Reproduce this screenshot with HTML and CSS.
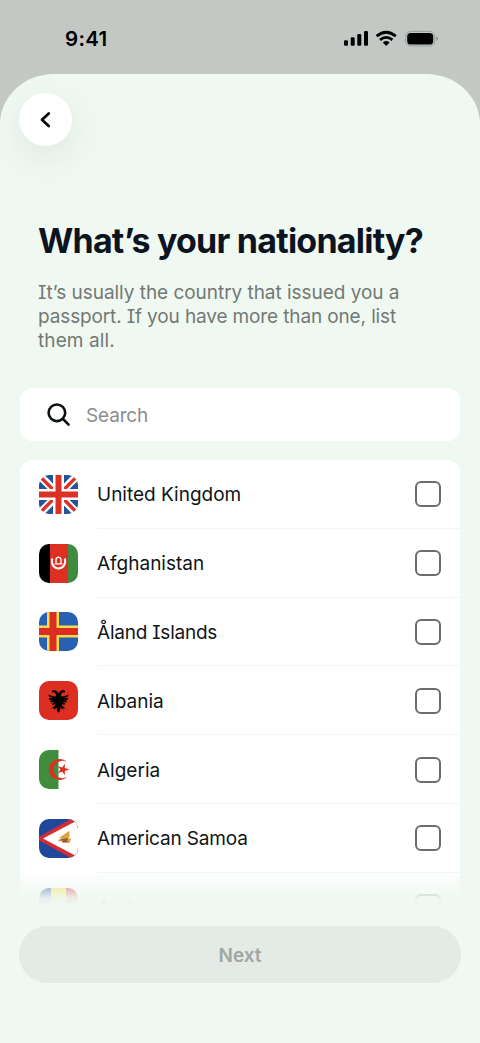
FILE: index.html
```html
<!DOCTYPE html>
<html lang="en">
<head>
<meta charset="utf-8">
<title>Nationality</title>
<link rel="stylesheet" href="styles.css">
</head>
<body>
<div class="status">
  <span class="time">9:41</span>
  <svg class="indicators" width="96" height="18" viewBox="0 0 96 18">
    <rect x="0" y="10.3" width="4" height="5.4" rx="1.2"/><rect x="6.7" y="7.3" width="4" height="8.4" rx="1.2"/><rect x="13.3" y="4" width="4" height="11.7" rx="1.2"/><rect x="20" y="1" width="4" height="14.7" rx="1.2"/>
    <g fill="none" stroke="#000" stroke-width="2.8"><path d="M32.6 6.2Q42.2-1.8 51.8 6.2"/><path d="M36 9.8Q42.2 5 48.4 9.8"/></g><path d="M38.8 12.5Q42.2 9.7 45.6 12.5L42.2 16Z"/>
    <rect x="61.7" y="1.4" width="29" height="14.6" rx="5" fill="none" stroke="#9b9f9b"/><rect x="63.2" y="2.9" width="26" height="11.6" rx="3.6"/><path d="M92.4 6.3Q95.6 8.7 92.4 11.1Z" fill="#858985"/>
  </svg>
</div>
<main class="sheet">
  <button class="back" aria-label="Back"><svg width="12" height="18" viewBox="0 0 12 18"><path d="M8.7 2.400 2 8.700l6.700 6.300"/></svg></button>
  <h1>What’s your nationality?</h1>
  <p class="intro"><span class="l1">It’s usually the country that issued you a</span><br><span class="l2">passport. If you have more than one, list</span><br><span class="l3">them all.</span></p>
  <div class="search"><svg width="24" height="24" viewBox="0 0 24 24"><circle cx="9.9" cy="9.8" r="8.3"/><path d="m16 16 5.600 5.600"/></svg><span>Search</span></div>
  <div class="list">
    <div class="row"><svg class="flag" viewBox="0 0 39 39"><path fill="#fff" d="M0 0h39v39H0z"/><path fill="#25539b" d="M5.5 0H14v8.5zM0 5.5 8.5 14H0zM25 0h8.5L25 8.5zM39 5.5V14h-8.5zM0 25h8.5L0 33.5zM14 30.5V39H5.5zM25 30.5l8.5 8.5H25zM30.5 25H39v8.5z"/><path fill="#dc3226" d="m1.5 4.5 2.5-2.6L14 12v2h-2.900zM25 12 35 1.9l2.5 2.4L27.8 14H25zM14 25h-2.800L1.6 34.8 4 37.1 14 27zM25 25h3l9.5 9.7-2.5 2.4L25 27z"/><path fill="#fff" d="M14 0h11v14h14v11H25v14H14V25H0V14h14z"/><path fill="#dc3226" d="M16.5 0h6v16.5H39v6H22.5V39h-6V22.5H0v-6h16.5z"/></svg><div class="body"><span class="name">United Kingdom</span><i class="box"></i></div></div>
    <div class="row"><svg class="flag" viewBox="0 0 39 39"><path d="M0 0h11v39H0z"/><path fill="#dc3022" d="M11 0h18v39H11z"/><path fill="#3f8b40" d="M29 0h10v39H29z"/><g fill="none" stroke="#fff"><path stroke-width="2" d="M13.2 14.5C11.8 20 14.7 24.5 19.5 24.5s7.8-4.5 6.3-10"/><path stroke-width="1.3" d="M17 19.500v-3.700q0-2.200 2.500-2.600 2.500.4 2.500 2.600v3.700M15.5 19.800h8"/></g></svg><div class="body"><span class="name">Afghanistan</span><i class="box"></i></div></div>
    <div class="row"><svg class="flag" viewBox="0 0 39 39"><path fill="#2861b2" d="M0 0h39v39H0z"/><path fill="#f9dc49" d="M8 0h12v13.5h19v12H20V39H8V25.500H0v-12h8z"/><path fill="#dc2d22" d="M10.500 0h7v16H39v7H17.500v16h-7V23H0v-7h10.500z"/></svg><div class="body"><span class="name islands">Åland Islands</span><i class="box"></i></div></div>
    <div class="row"><svg class="flag" viewBox="0 0 39 39"><path fill="#dc2e21" d="M0 0h39v39H0z"/><path d="M19.500 12.500 18 10.200l-2.500-1.300-2.700.8.4 1.700 2.500.2 1.300 1.800-.3 2-2.400-.1-5-1.700.8 2.200 4.700 1.500-5-.4.8 2 4.500.4-4.300.5 1.200 1.700 4-.6-3.500 1.900 1.600 1.100 2.600-1.100-1.400 2.400-2.800 2 2.500.1.400 1.500 2.300-2.200.3 3.200 1.500 2 1.500-2 .3-3.200 2.300 2.200.4-1.500 2.500-.1-2.800-2-1.400-2.400 2.600 1.100 1.600-1.100-3.500-1.900 4 .6 1.200-1.700-4.300-.5 4.500-.4.8-2-5 .4 4.700-1.500.8-2.200-5 1.700-2.400.1-.3-2 1.300-1.800 2.500-.2.400-1.700-2.700-.8-2.500 1.300z"/></svg><div class="body"><span class="name">Albania</span><i class="box"></i></div></div>
    <div class="row"><svg class="flag" viewBox="0 0 39 39"><path fill="#fff" d="M0 0h39v39H0z"/><path fill="#408d3e" d="M0 0h19.500v39H0z"/><path fill="#dc3025" d="M28 12.200A10.500 10.500 0 1 0 28 26.800 8.700 8.700 0 1 1 28 12.200M30.500 19.500l-4.700-1.600.1-4.100-2.700 3.600-4.300-1.200 2.500 3.300-2.500 3.400 4.300-1.200 2.700 3.500-.1-4.100z"/></svg><div class="body"><span class="name">Algeria</span><i class="box"></i></div></div>
    <div class="row"><svg class="flag" viewBox="0 0 39 39"><path fill="#21479a" d="M0 0h39v39H0z"/><path fill="#d42c32" d="M0 17.700 32 0h7v39h-7L0 21.300z"/><path fill="#fff" d="M4 19.500 39 1v37z"/><path fill="#dda13b" d="m20 19 10.500-7.300v6.200l-2 1.600H32L30.500 24l-8-.3 3-1.700-6 .5 5-2.200z"/><path fill="#8b5d36" d="m20.500 20.500 9-1.500-2 3.200 3 .8-8 .3 2-1.800-5.500.3z"/></svg><div class="body"><span class="name samoa">American Samoa</span><i class="box"></i></div></div>
    <div class="row"><svg class="flag" viewBox="0 0 39 39"><path fill="#25539b" d="M0 0h12v39H0z"/><path fill="#f5df31" d="M12 0h15v39H12z"/><path fill="#dc2f34" d="M27 0h12v39H27z"/></svg><div class="body"><span class="name">Andorra</span><i class="box"></i></div></div>
    <div class="fade"></div>
  </div>
  <button class="next">Next</button>
</main>
</body>
</html>
```
FILE: styles.css
```css
* { box-sizing: border-box; }
body { margin: 0; width: 480px; height: 1043px; overflow: hidden; background: #c4c8c4; font-family: Inter, sans-serif; color: #101516; }
button { border: 0; padding: 0; font-family: inherit; }
svg { display: block; flex: none; }
.status { height: 74px; display: flex; align-items: flex-start; justify-content: space-between; padding: 26px 40px 0 65px; color: #000; }
.time { font-size: 20.5px; line-height: 26px; font-weight: 560; letter-spacing: .3px; }
.indicators { margin: 4px 0 0; }
.sheet { height: 969px; display: flex; flex-direction: column; padding: 19px 20px 0; background: #f0f8f2; border-radius: 54px 54px 0 0 / 50px 50px 0 0; }
.back { width: 53px; height: 53px; flex: none; margin-left: -1px; border-radius: 50%; background: #fff; display: flex; align-items: center; justify-content: center; box-shadow: 0 12px 36px rgba(30, 40, 30, .08); }
.back path { fill: none; stroke: #080c0e; stroke-width: 2.8; stroke-linecap: round; stroke-linejoin: round; }
h1 { margin: 73px 0 0 18px; font-size: 34px; line-height: 44px; font-weight: 700; letter-spacing: -.77px; color: #0c1422; white-space: nowrap; }
.intro { margin: 18px 0 0 18px; font-size: 19px; line-height: 24px; color: #737874; white-space: nowrap; font-feature-settings: "cv08"; }
.l1 { letter-spacing: -.04px; }
.l2 { letter-spacing: -.13px; }
.l3 { letter-spacing: .1px; }
.search { height: 53px; flex: none; margin-top: 35px; padding-left: 27px; display: flex; align-items: center; gap: 15px; border-radius: 12px; background: #fff; font-size: 19px; color: #8b8d8c; }
.search svg { fill: none; stroke: #0c1113; stroke-width: 2.6; stroke-linecap: round; }
.search span { padding-top: 2px; letter-spacing: -.15px; }
.list { position: relative; height: 464px; flex: none; margin-top: 19px; overflow: hidden; border-radius: 12px 12px 0 0; background: #fff; }
.row { display: flex; align-items: center; height: 68.8px; padding-left: 19px; gap: 19px; }
.flag { width: 39px; height: 39px; border-radius: 10px; }
.body { flex: 1; align-self: stretch; display: flex; align-items: center; justify-content: space-between; padding: 1px 19px 0 0; border-bottom: 1px solid #f3f5f3; }
.name { padding-top: 2px; font-size: 19px; line-height: 26px; font-feature-settings: "cv08"; }
.islands { letter-spacing: -.23px; }
.samoa { letter-spacing: -.16px; }
.box { width: 26px; height: 26px; border: 2px solid #6b6e6d; border-radius: 6px; }
.fade { position: absolute; left: 0; right: 0; bottom: 0; height: 54px; background: linear-gradient(#f0f8f200, #f0f8f2b0 36%, #f0f8f2f0 52%, #f0f8f2 66%); }
.next { position: relative; height: 57px; flex: none; margin: 2px -1px 0; padding-top: 1px; border-radius: 29px; background: #e4eae5; color: #a1a7a3; font-size: 19px; font-weight: 600; }
```
